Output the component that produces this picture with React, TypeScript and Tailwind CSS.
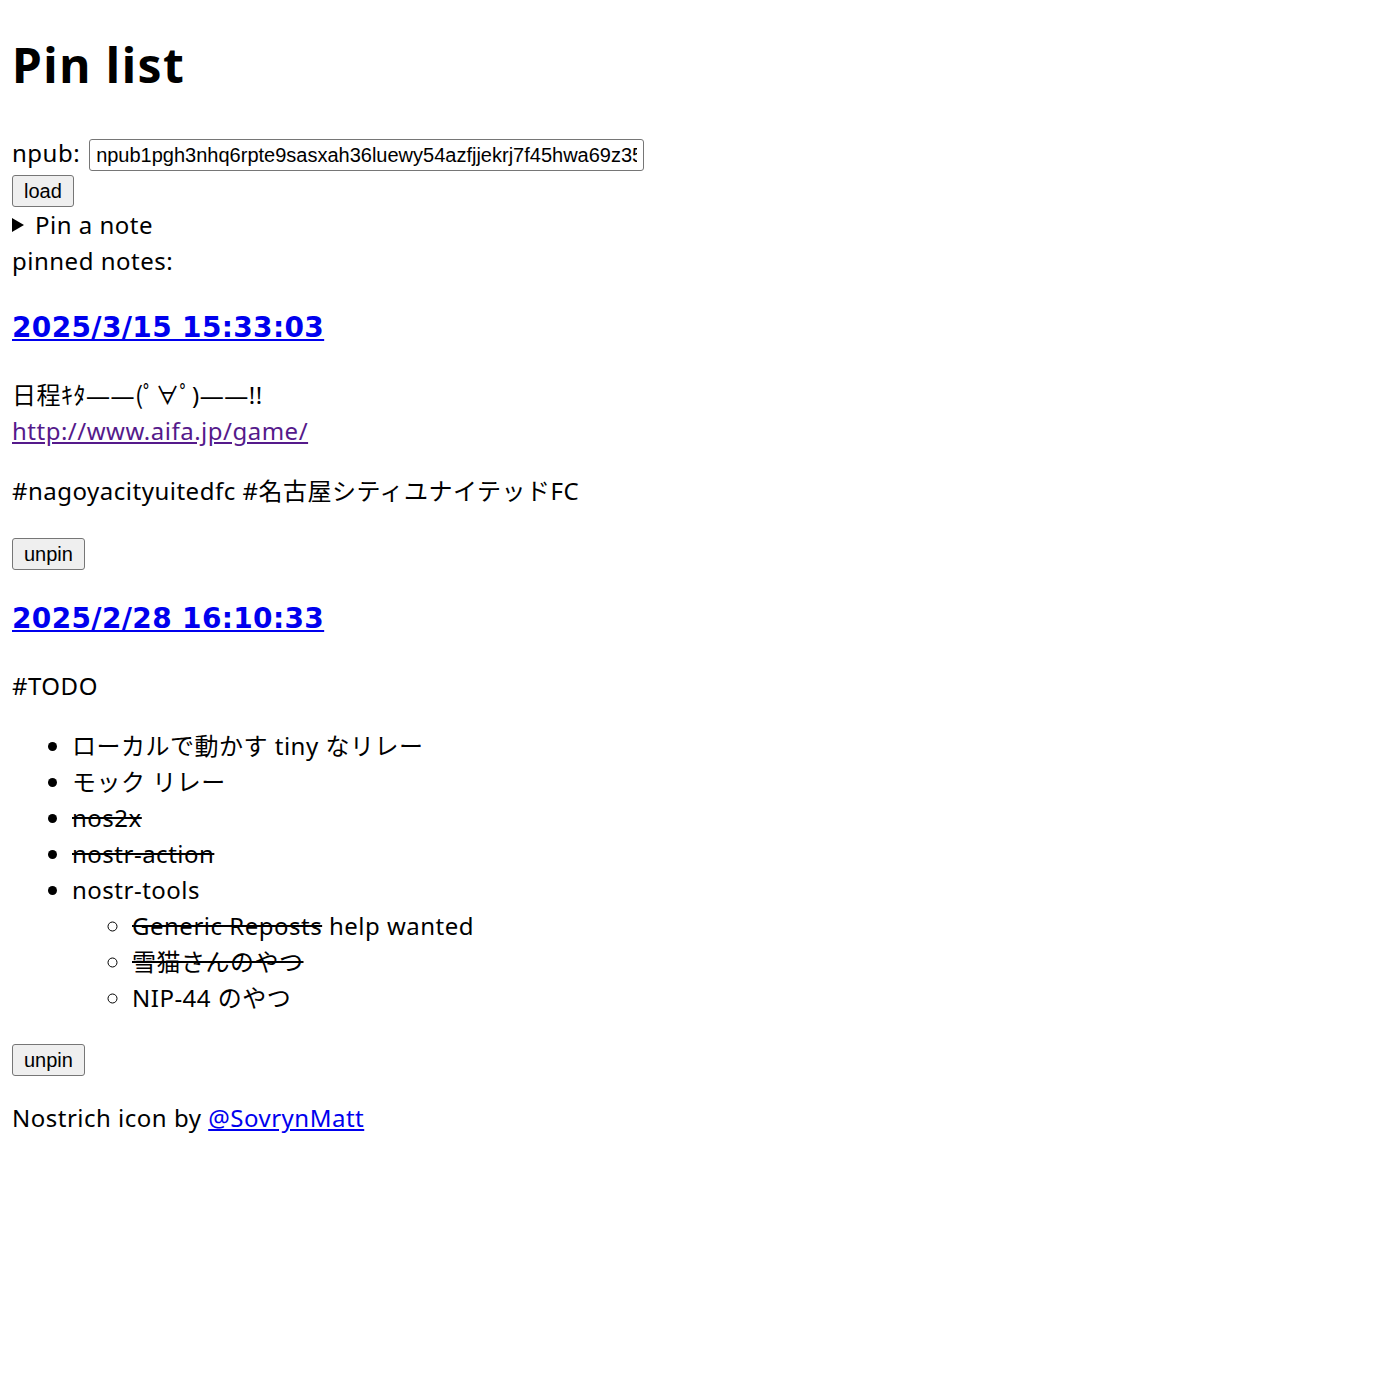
const font = "font-['Noto_Sans','Noto_Sans_CJK_JP',sans-serif]";

function Btn({ children }: { children: React.ReactNode }) {
  return (
    <button className="h-[32px] px-[11px] bg-[#efefef] border border-[#767676] rounded-[3px] text-[20px] leading-[24px] tracking-normal text-black font-['Liberation_Sans',Arial,sans-serif]">
      {children}
    </button>
  );
}

function DateLink({ children }: { children: React.ReactNode }) {
  return (
    <h3 className="my-[28px] text-[28px] leading-[42px] font-bold tracking-[0.35px] font-['DejaVu_Sans',sans-serif]">
      <a href="#" className="text-[#0000ee] underline">
        {children}
      </a>
    </h3>
  );
}

export default function App() {
  return (
    <div className={`${font} px-[12px] text-[24px] leading-[36px] tracking-[0.5px] text-black bg-white min-h-[1389px]`}>
      <h1 className="pt-[32px] text-[48px] leading-[66px] font-bold tracking-[1.5px]">Pin list</h1>

      <div className="mt-[41px] flex items-center h-[32px]">
        <span className="-mt-[4px]">npub:</span>
        <input
          type="text"
          readOnly
          value="npub1pgh3nhq6rpte9sasxah36luewy54azfjjekrj7f45hwa69z35qsqs0u0e4"
          className="ml-[9px] w-[555px] h-[32px] px-[6px] border border-[#767676] rounded-[3px] text-[20px] tracking-normal font-['Liberation_Sans',Arial,sans-serif] outline-none"
        />
      </div>
      <div className="mt-[4px] flex h-[32px]">
        <Btn>load</Btn>
      </div>

      <details>
        <summary className="cursor-pointer list-none flex items-center [&::-webkit-details-marker]:hidden">
          <span className="w-0 h-0 border-y-[7px] border-y-transparent border-l-[12px] border-l-black mr-[11px]" />
          Pin a note
        </summary>
      </details>
      <div>pinned notes:</div>

      <DateLink>2025/3/15 15:33:03</DateLink>
      <p>
        日程ｷﾀ——(ﾟ∀ﾟ)——!!
        <br />
        <a href="#" className="text-[#551a8b] underline">
          http://www.aifa.jp/game/
        </a>
      </p>
      <p className="mt-[24px]">#nagoyacityuitedfc #名古屋シティユナイテッドFC</p>
      <div className="mt-[29px] flex h-[32px] mb-[3px]">
        <Btn>unpin</Btn>
      </div>

      <DateLink>2025/2/28 16:10:33</DateLink>
      <p>#TODO</p>
      <ul className="mt-[24px] pl-[60px] list-disc">
        <li>ローカルで動かす tiny なリレー</li>
        <li>モック リレー</li>
        <li>
          <s>nos2x</s>
        </li>
        <li>
          <s>nostr-action</s>
        </li>
        <li>
          nostr-tools
          <ul className="pl-[60px] list-[circle]">
            <li>
              <s>Generic Reposts</s> help wanted
            </li>
            <li>
              <s>雪猫さんのやつ</s>
            </li>
            <li>NIP-44 のやつ</li>
          </ul>
        </li>
      </ul>
      <div className="mt-[28px] flex h-[32px]">
        <Btn>unpin</Btn>
      </div>

      <p className="mt-[24px]">
        Nostrich icon by{" "}
        <a href="#" className="text-[#0000ee] underline">
          @SovrynMatt
        </a>
      </p>
    </div>
  );
}
